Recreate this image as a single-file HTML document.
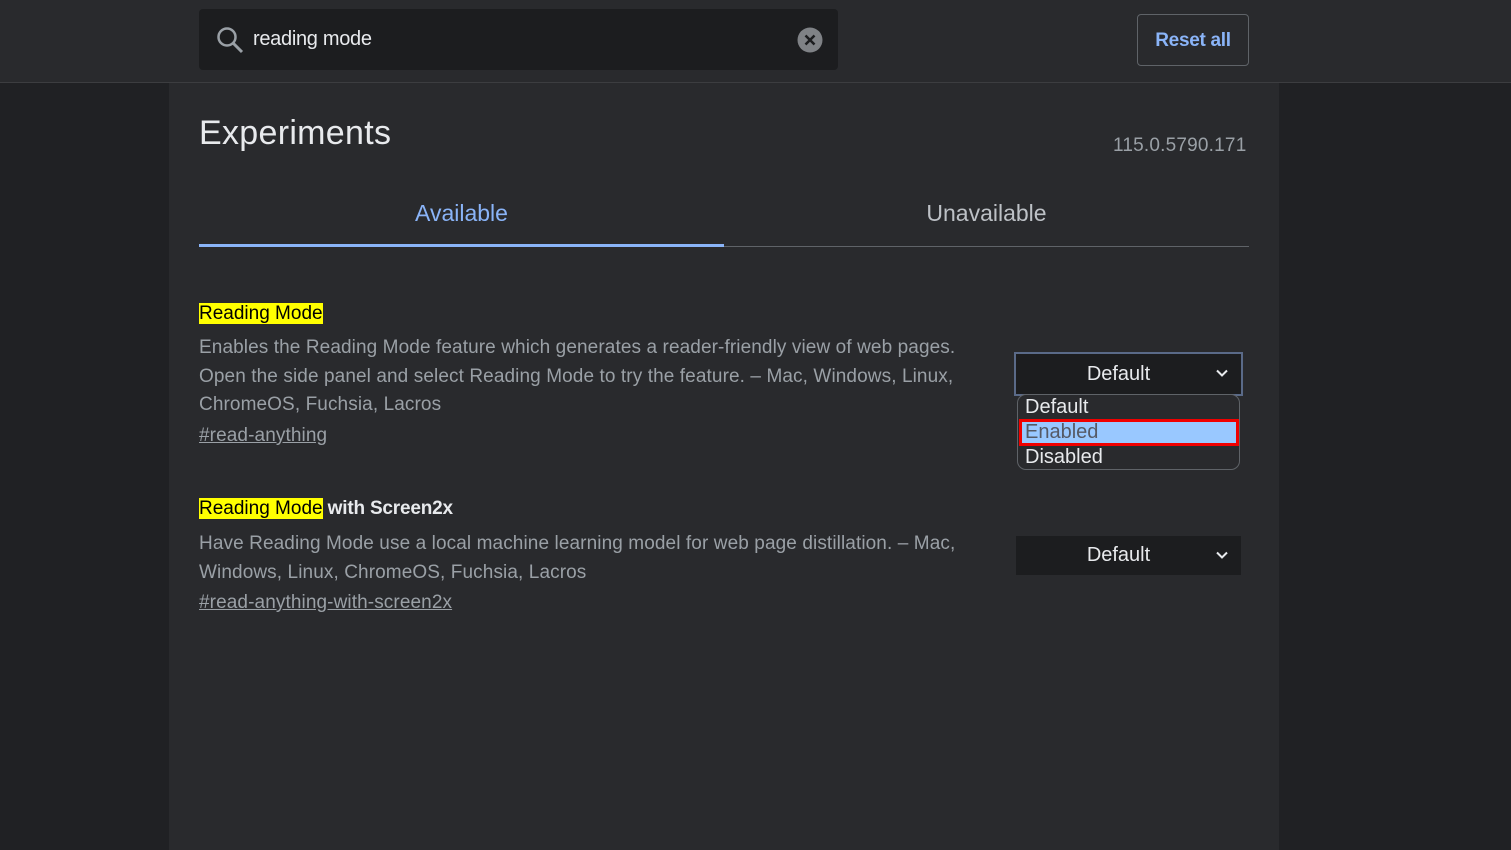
<!DOCTYPE html>
<html><head><meta charset="utf-8"><style>
*{margin:0;padding:0;box-sizing:border-box}
body{width:1511px;height:850px;background:#202124;font-family:"Liberation Sans",Arial,sans-serif;position:relative;overflow:hidden;color:#e8eaed}
.hdr{position:absolute;left:0;top:0;width:1511px;height:83px;background:#292a2d;border-bottom:1px solid #3c3d40}
.search{position:absolute;left:199px;top:9px;width:639px;height:61px;background:#1c1d1f;border-radius:4px}
.search .t{position:absolute;left:54px;top:19px;font-size:20px;color:#e8eaed;letter-spacing:-0.3px}
.reset{position:absolute;left:1137px;top:14px;width:112px;height:52px;border:1px solid #5f6368;border-radius:4px;color:#8ab4f8;font-size:19px;font-weight:bold;text-align:center;line-height:52px;letter-spacing:-0.3px}
.main{position:absolute;left:169px;top:83px;width:1110px;height:767px;background:#292a2d}
.abs{position:absolute}
h1{position:absolute;left:199px;top:114px;font-size:34px;font-weight:normal;color:#e8eaed;letter-spacing:0.3px}
.ver{left:1113px;top:135px;font-size:19px;color:#9aa0a6;letter-spacing:0.2px}
.tab{top:200px;font-size:23px;width:525px;text-align:center}
.hl{background:#ffff00;color:#000}
.ttl{left:199px;font-size:19px;font-weight:bold;color:#e8eaed;letter-spacing:-0.2px}
.ttl .hl{font-weight:normal;letter-spacing:0}
.desc{left:199px;font-size:19px;color:#9aa0a6;line-height:28.5px;width:790px;letter-spacing:0.1px}
.lnk{left:199px;font-size:19px;color:#9aa0a6;text-decoration:underline;letter-spacing:0.1px}
.sel{background:#1c1d1f;color:#e8eaed;font-size:20px;padding-right:20px;text-align:center}
.chev{position:absolute;right:12px;top:12px}
</style></head><body>
<div class="hdr">
 <div class="search">
  <svg class="abs" style="left:16px;top:16px" width="30" height="30" viewBox="0 0 30 30"><circle cx="12" cy="12" r="8.5" fill="none" stroke="#9aa0a6" stroke-width="2.5"/><path d="M18 18 L27 27" stroke="#9aa0a6" stroke-width="3"/></svg>
  <div class="t">reading mode</div>
  <svg class="abs" style="left:598px;top:18px" width="26" height="26" viewBox="0 0 26 26"><circle cx="13" cy="13" r="12.5" fill="#7f8286"/><path d="M8.5 8.5 L17.5 17.5 M17.5 8.5 L8.5 17.5" stroke="#1c1d1f" stroke-width="2.5"/></svg>
 </div>
 <div class="reset">Reset all</div>
</div>
<div class="main"></div>
<h1>Experiments</h1>
<div class="abs ver">115.0.5790.171</div>
<div class="abs tab" style="left:199px;color:#8ab4f8">Available</div>
<div class="abs tab" style="left:724px;color:#bdc1c6">Unavailable</div>
<div class="abs" style="left:199px;top:246px;width:1050px;height:1px;background:#5f6368"></div>
<div class="abs" style="left:199px;top:244px;width:525px;height:3px;background:#8ab4f8"></div>

<div class="abs ttl" style="top:303px"><span class="hl">Reading Mode</span></div>
<div class="abs desc" style="top:334px">Enables the Reading Mode feature which generates a reader-friendly view of web pages. Open the side panel and select Reading Mode to try the feature. – Mac, Windows, Linux, ChromeOS, Fuchsia, Lacros</div>
<div class="abs lnk" style="top:425px">#read-anything</div>

<div class="abs sel" style="left:1014px;top:352px;width:229px;height:44px;border:2px solid #5a6a88;line-height:40px">Default
 <svg class="chev" width="14" height="14" viewBox="0 0 14 14"><path d="M2 4.5 L7 9.5 L12 4.5" fill="none" stroke="#e8eaed" stroke-width="2"/></svg></div>
<div class="abs" style="left:1017px;top:394px;width:223px;height:76px;border:1px solid #5f6368;border-radius:9px;background:#292a2d;font-size:20px;color:#e8eaed">
 <div class="abs" style="left:7px;top:1px">Default</div>
 <div class="abs" style="left:1px;top:24px;width:220px;height:27px;background:#99c8ff;border:3px solid #f00000"></div>
 <div class="abs" style="left:7px;top:26px;color:#555a66">Enabled</div>
 <div class="abs" style="left:7px;top:51px">Disabled</div>
</div>

<div class="abs ttl" style="top:498px"><span class="hl">Reading Mode</span> with Screen2x</div>
<div class="abs desc" style="top:530px">Have Reading Mode use a local machine learning model for web page distillation. – Mac, Windows, Linux, ChromeOS, Fuchsia, Lacros</div>
<div class="abs lnk" style="top:592px">#read-anything-with-screen2x</div>
<div class="abs sel" style="left:1016px;top:536px;width:225px;height:39px;line-height:39px">Default
 <svg class="chev" style="top:12px" width="14" height="14" viewBox="0 0 14 14"><path d="M2 4.5 L7 9.5 L12 4.5" fill="none" stroke="#e8eaed" stroke-width="2"/></svg></div>
</body></html>
